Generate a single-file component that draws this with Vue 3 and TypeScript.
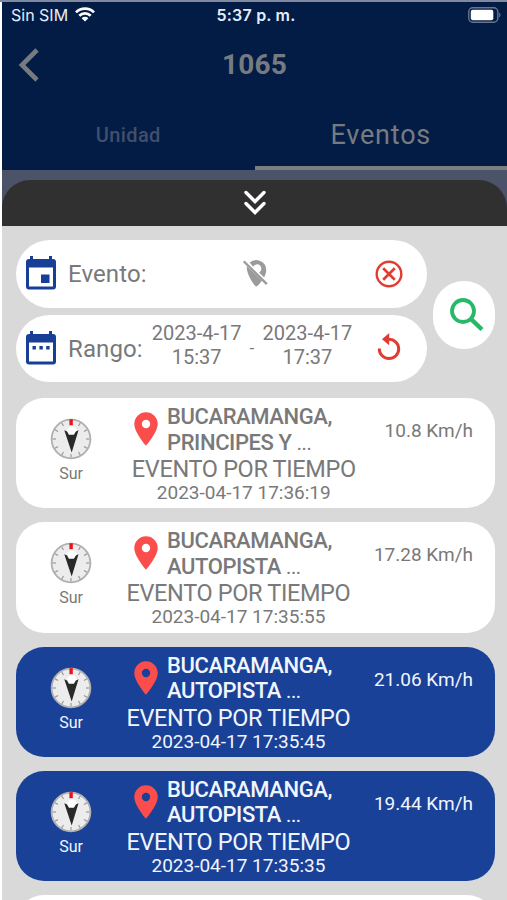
<script setup lang="ts">
interface EventItem {
  place: string
  area: string
  kind: string
  date: string
  speed: string
  heading: string
  active: boolean
}

const kind = 'EVENTO POR TIEMPO'
const events: EventItem[] = [
  { place: 'BUCARAMANGA,', area: 'PRINCIPES Y', kind, date: '2023-04-17 17:36:19', speed: '10.8 Km/h', heading: 'Sur', active: false },
  { place: 'BUCARAMANGA,', area: 'AUTOPISTA', kind, date: '2023-04-17 17:35:55', speed: '17.28 Km/h', heading: 'Sur', active: false },
  { place: 'BUCARAMANGA,', area: 'AUTOPISTA', kind, date: '2023-04-17 17:35:45', speed: '21.06 Km/h', heading: 'Sur', active: true },
  { place: 'BUCARAMANGA,', area: 'AUTOPISTA', kind, date: '2023-04-17 17:35:35', speed: '19.44 Km/h', heading: 'Sur', active: true },
]
const ticks = [30, 60, 90, 120, 150, 180, 210, 240, 270, 300, 330]
</script>

<template>
  <div class="screen">
    <header class="top">
      <div class="status">
        <div class="carrier">
          <span>Sin SIM</span>
          <svg width="20" height="15" viewBox="0 0 20 15">
            <g fill="none" stroke="#fff" stroke-width="2.7">
              <path d="M1 5.4a12.8 12.8 0 0 1 18 0" />
              <path d="M4.3 8.8a8.1 8.1 0 0 1 11.4 0" />
            </g>
            <path d="M10 14.6 6.6 11.2a4.8 4.8 0 0 1 6.8 0z" fill="#fff" />
          </svg>
        </div>
        <span class="clock">5:37 p. m.</span>
        <svg class="battery" width="33" height="16" viewBox="0 0 33 16">
          <rect x=".8" y=".8" width="29" height="14.4" rx="4" fill="none" stroke="#69748e" stroke-width="1.4" />
          <rect x="2.8" y="2.7" width="22.5" height="10.6" rx="2" fill="#fff" />
          <path d="M31.2 5.5a3 3 0 0 1 0 5z" fill="#69748e" />
        </svg>
      </div>
      <div class="titlebar">
        <svg class="back" width="22" height="34" viewBox="0 0 22 34">
          <path d="M19 2 4 17l15 15" fill="none" stroke="#777b80" stroke-width="4.6" />
        </svg>
        <h1>1065</h1>
      </div>
      <nav class="tabs">
        <span class="tab">Unidad</span>
        <span class="tab current">Eventos</span>
      </nav>
    </header>

    <div class="sheet">
      <div class="handle">
        <svg width="22" height="26" viewBox="0 0 22 26">
          <path d="m2 2.5 9 9 9-9M2 13.5l9 9 9-9" fill="none" stroke="#fff" stroke-width="3.4" stroke-linecap="round" />
        </svg>
      </div>
    </div>

    <main class="content">
      <section class="filters">
        <div class="pills">
          <div class="pill">
            <svg class="cal" width="32" height="36" viewBox="0 0 32 36">
              <path fill="#183f96" fill-rule="evenodd" d="M5 1h3v3h16V1h3v3h1a3 3 0 0 1 3 3v24.5a3 3 0 0 1-3 3H4a3 3 0 0 1-3-3V7a3 3 0 0 1 3-3h1zM4 12.5v19h24v-19zM16 19.5h8.5v8.5H16z" />
            </svg>
            <span class="label">Evento:</span>
            <svg class="pin-off" width="26" height="28" viewBox="0 0 26 28">
              <g fill="#9b9b9b">
                <path d="M6.6 3.6A10 10 0 0 1 23.2 11c0 2.600-.8 5-2.100 7.400l-5-5a4.300 4.300 0 1 0-5.900-5.700z" />
                <path d="M3.800 7.200 19 21.400c-2 3-5 6.100-5.700 6.100C11.500 27.500 3 15 3.800 7.200z" />
                <path d="M1.500 1.500 24.700 24.200l-1.700 1.800L0 3.200z" />
              </g>
            </svg>
            <svg class="clear" width="28" height="28" viewBox="0 0 28 28">
              <g fill="none" stroke="#e23b32" stroke-width="2.4">
                <circle cx="14" cy="14" r="12.300" />
                <path stroke-width="2.700" d="m8.200 8.200 11.600 11.600M19.800 8.200 8.200 19.800" />
              </g>
            </svg>
          </div>
          <div class="pill">
            <svg class="cal low" width="32" height="36" viewBox="0 0 32 36">
              <path fill="#183f96" fill-rule="evenodd" d="M5 1h3v3h16V1h3v3h1a3 3 0 0 1 3 3v24.5a3 3 0 0 1-3 3H4a3 3 0 0 1-3-3V7a3 3 0 0 1 3-3h1zM4 12.5v19h24v-19zM7.500 16h3.400v3.500H7.500zM14.400 16h3.400v3.500h-3.400zM21.200 16h3.400v3.500h-3.400z" />
            </svg>
            <span class="label rango">Rango:</span>
            <div class="range from"><span>2023-4-17</span><span>15:37</span></div>
            <span class="dash">-</span>
            <div class="range"><span>2023-4-17</span><span>17:37</span></div>
            <svg class="reset" width="24" height="28" viewBox="0 0 24 28">
              <path d="M11.500 6.200A9.700 9.700 0 1 1 2.300 15.500" fill="none" stroke="#e23b32" stroke-width="3" />
              <path d="M12.200 0v12.200L5 6.200z" fill="#e23b32" />
            </svg>
          </div>
        </div>
        <button class="search" aria-label="Buscar">
          <svg width="36" height="36" viewBox="0 0 36 36">
            <g fill="none" stroke="#27b96a">
              <circle cx="14" cy="14" r="11" stroke-width="3.800" />
              <path d="m21.800 21.800 11.200 10.700" stroke-width="4.400" />
            </g>
          </svg>
        </button>
      </section>

      <section class="list">
        <article v-for="item in events" :key="item.date" class="card" :class="{ active: item.active }">
          <div class="heading">
            <svg width="42" height="42" viewBox="0 0 42 42">
              <circle cx="21" cy="21" r="19.400" fill="#ececec" stroke="#b0b0b0" stroke-width="1.800" />
              <path v-for="deg in ticks" :key="deg" d="M21 2.500v3.500" stroke="#959595" stroke-width="1.100" :transform="`rotate(${deg} 21 21)`" />
              <circle cx="22" cy="13.500" r="5" fill="#fff" />
              <path d="M19.400 1.200h3.400v6h-3.400z" fill="#e8131d" />
              <path d="m14.300 12.200 2.800 1.200 1.800 3.300h5l2-3.300 2.600-1.200-6.800 22.400z" fill="#292929" />
            </svg>
            <span>{{ item.heading }}</span>
          </div>
          <div class="info">
            <div class="place">
              <svg width="24" height="34" viewBox="0 0 24 34">
                <path fill="#fb4d4c" fill-rule="evenodd" d="M12 .3A11.700 11.700 0 0 0 .3 12C.3 20.500 12 33.700 12 33.700S23.700 20.500 23.700 12A11.700 11.700 0 0 0 12 .3zM12 7.800a4.200 4.200 0 1 1 0 8.400 4.200 4.200 0 0 1 0-8.400z" />
              </svg>
              <div class="address">
                <strong>{{ item.place }}</strong>
                <div><strong>{{ item.area }}</strong> <span class="more">...</span></div>
              </div>
            </div>
            <span class="kind">{{ item.kind }}</span>
            <span class="date">{{ item.date }}</span>
          </div>
          <span class="speed">{{ item.speed }}</span>
        </article>
        <div class="card next"></div>
      </section>
    </main>
  </div>
</template>

<style>
body {
  background: #fff;
  overflow: hidden;
}
</style>

<style scoped>
.screen {
  box-sizing: border-box;
  width: 507px;
  height: 900px;
  overflow: hidden;
  padding-left: 2px;
  border-top: 2px solid #8089a0;
  background: #fff;
  font-family: Roboto, sans-serif;
  color: #797979;
  display: flex;
  flex-direction: column;
}
svg { display: block; flex: none; }
.top { height: 168px; background: #031c46; flex: none; display: flex; flex-direction: column; }
.status {
  height: 25px;
  display: grid;
  grid-template-columns: 1fr auto 1fr;
  align-items: center;
  padding: 0 6px 0 9px;
  font: 16px Inter, sans-serif;
  color: #e6edf9;
}
.carrier { display: flex; align-items: center; gap: 7px; }
.carrier svg { width: 20px; }
.clock { font-weight: 600; letter-spacing: .2px; }
.battery { justify-self: end; }
.titlebar { height: 76px; display: grid; grid-template-columns: 80px 1fr 80px; align-items: center; }
.back { margin-left: 16px; }
h1 { margin: 0; text-align: center; font-size: 28px; line-height: 34px; font-weight: 700; letter-spacing: .2px; color: #777b80; }
.tabs { flex: 1; display: grid; grid-template-columns: 1fr 1fr; }
.tab {
  display: flex;
  align-items: center;
  justify-content: center;
  padding-bottom: 4px;
  font-size: 20px;
  font-weight: 500;
  letter-spacing: .4px;
  color: #414f6b;
}
.current { padding: 0; font-size: 27px; font-weight: 400; letter-spacing: .8px; color: #777b80; border-bottom: 4px solid #7b7e81; }
.sheet { flex: none; background: #4a5368; padding-top: 10px; }
.handle {
  height: 46px;
  background: #303030;
  border-radius: 28px 28px 0 0;
  display: flex;
  align-items: center;
  justify-content: center;
}
.content { flex: 1; background: #d9d9d9; padding: 14px 12px 0 14px; }
.filters { display: flex; align-items: center; gap: 6px; margin-bottom: 16px; }
.pills { width: 411px; display: flex; flex-direction: column; gap: 7px; }
.pill { height: 67.500px; border-radius: 34px; background: #fff; display: flex; align-items: center; box-sizing: border-box; padding: 0 24px 0 9px; }
.label { margin-left: 11px; font-size: 24px; letter-spacing: .1px; padding-top: 1px; }
.rango { padding-top: 2px; }
.cal { margin-top: -2px; }
.low { margin-top: 0; }
.pin-off { margin-left: 96px; margin-top: -2px; }
.clear { margin-left: auto; }
.range { display: flex; flex-direction: column; align-items: center; font-size: 20px; line-height: 24px; margin-top: -7px; }
.from { margin-left: 9px; }
.dash { width: 21px; text-align: center; font-size: 17px; }
.reset { margin-left: auto; margin-right: 2px; margin-top: -3px; }
.search { width: 62px; height: 68px; border: 0; border-radius: 31px; padding: 0; margin: 7px 0 0; background: #fff; display: grid; place-items: center; }
.search svg { margin: 0 0 0 5px; }
.list { display: flex; flex-direction: column; gap: 14px; }
.card {
  box-sizing: border-box;
  height: 110.250px;
  flex: none;
  border-radius: 28px;
  background: #fff;
  display: flex;
  align-items: flex-start;
  padding: 5px 22px 0 34px;
}
.active { background: #194197; color: #f1f5ff; }
.heading { width: 42px; margin-top: 15px; display: flex; flex-direction: column; align-items: center; font-size: 16px; line-height: 20px; }
.heading span { margin-top: 4px; }
.info { flex: 1; margin: 0 10px 0 21px; display: flex; flex-direction: column; align-items: center; }
.place { align-self: stretch; padding: 1px 0 0 21px; display: flex; gap: 9px; white-space: nowrap; }
.place svg { margin-top: 8px; }
.address { font-size: 22px; line-height: 25.500px; letter-spacing: -.4px; }
.address strong { font-weight: 500; }
.more { font-size: 20px; }
.kind { font-size: 23.500px; line-height: 26px; letter-spacing: -.35px; white-space: nowrap; }
.date { font-size: 19px; line-height: 22px; white-space: nowrap; }
.speed { margin-top: 17px; font-size: 19px; line-height: 22px; white-space: nowrap; }
</style>
